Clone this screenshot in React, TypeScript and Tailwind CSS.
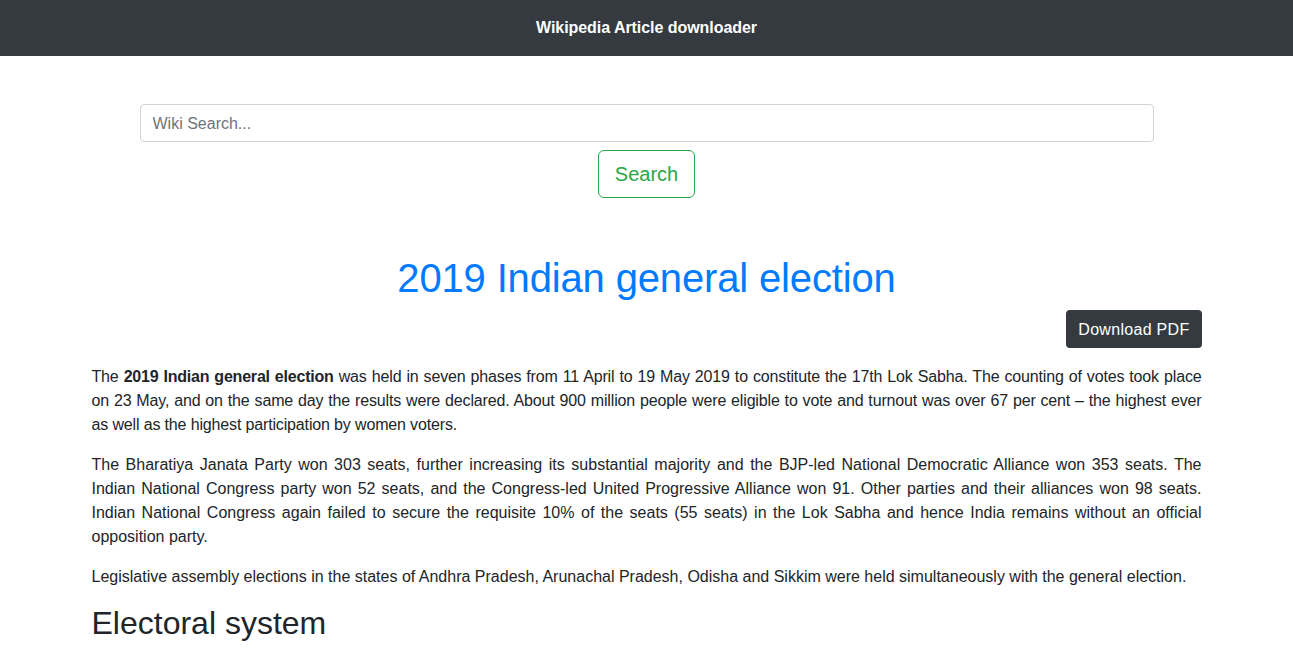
import React, { useState } from 'react';

const App: React.FC = () => {
  const [query, setQuery] = useState('');

  return (
    <div className="min-h-screen bg-white text-[#212529] font-['Liberation_Sans',Arial,sans-serif] text-base leading-6">
      <nav className="h-14 bg-[#343a40] flex items-center justify-center">
        <span className="text-white font-bold text-base tracking-[-0.05px]">Wikipedia Article downloader</span>
      </nav>

      <div className="w-[1140px] mx-auto px-[15px]">
        <div className="mt-12 flex flex-col items-center">
          <input
            type="text"
            value={query}
            onChange={e => setQuery(e.target.value)}
            placeholder="Wiki Search..."
            className="w-[1014px] h-[38px] px-3 pt-px border border-[#ced4da] rounded bg-white text-base text-[#495057] placeholder:text-[#6c757d] outline-none"
          />
          <button className="mt-2 h-12 px-4 border border-[#28a745] rounded-md text-[#28a745] text-xl bg-white">
            Search
          </button>
        </div>

        <h1 className="mt-14 mb-2 text-center text-[40px] leading-[48px] text-[#007bff] tracking-[-0.15px]">
          2019 Indian general election
        </h1>

        <div className="flex justify-end">
          <button className="h-[38px] px-3 pt-px rounded bg-[#343a40] text-white text-base tracking-[0.3px]">
            Download PDF
          </button>
        </div>

        <div className="mt-[17px] text-justify">
          <p className="mb-4 tracking-[-0.15px]">
            The <b className="tracking-[-0.2px]">2019 Indian general election</b> was held in seven phases from 11 April to 19 May 2019 to constitute the 17th Lok Sabha. The counting of votes took place on 23 May, and on the same day the results were declared. About 900 million people were eligible to vote and turnout was over 67 per cent – the highest ever as well as the highest participation by women voters.
          </p>
          <p className="mb-4">
            The Bharatiya Janata Party won 303 seats, further increasing its substantial majority and the BJP-led National Democratic Alliance won 353 seats. The Indian National Congress party won 52 seats, and the Congress-led United Progressive Alliance won 91. Other parties and their alliances won 98 seats. Indian National Congress again failed to secure the requisite 10% of the seats (55 seats) in the Lok Sabha and hence India remains without an official opposition party.
          </p>
          <p className="mb-[15px]">
            Legislative assembly elections in the states of Andhra Pradesh, Arunachal Pradesh, Odisha and Sikkim were held simultaneously with the general election.
          </p>
          <h2 className="text-[32px] leading-[38px] mb-2">Electoral system</h2>
        </div>
      </div>
    </div>
  );
};

export default App;
